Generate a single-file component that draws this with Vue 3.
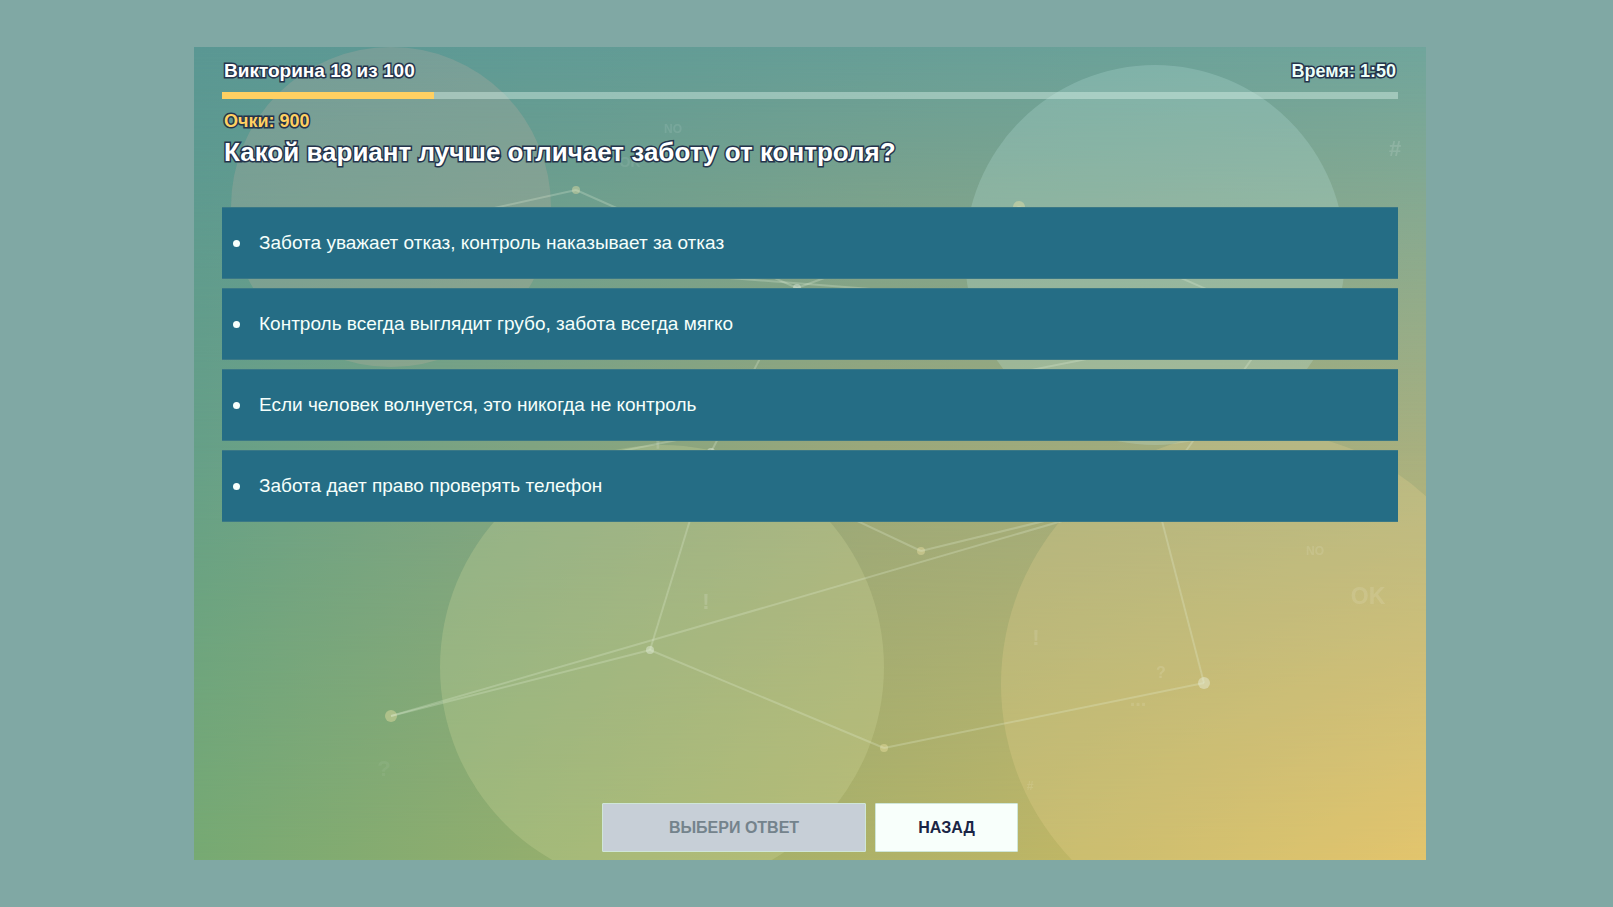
<script setup>
import { ref } from 'vue'

const quiz = { number: 18, total: 100, time: '1:50', score: 900 }
const question = 'Какой вариант лучше отличает заботу от контроля?'
const answers = [
  'Забота уважает отказ, контроль наказывает за отказ',
  'Контроль всегда выглядит грубо, забота всегда мягко',
  'Если человек волнуется, это никогда не контроль',
  'Забота дает право проверять телефон',
]
const selected = ref(null)

const circles = [
  { x: 197, y: 160, r: 160, fill: '#ffb8b0', opacity: 0.16 },
  { x: 961, y: 208, r: 190, fill: '#c6eee6', opacity: 0.22 },
  { x: 468, y: 620, r: 222, fill: '#d3dda0', opacity: 0.26 },
  { x: 1061, y: 637, r: 254, fill: '#f5dc96', opacity: 0.22 },
]
const points = {
  a: [382, 143, 4, 1], b: [825, 160, 6, 1], c: [603, 241, 4, 0], d: [517, 405, 4, 0],
  e: [456, 603, 4, 0], f: [197, 669, 6, 1], g: [727, 504, 4, 1], h: [690, 701, 4, 1],
  i: [1010, 636, 6, 0], j: [961, 447, 4, 0], k: [1085, 274, 4, 0], l: [296, 430, 4, 1],
  m: [128, 199, 4, 0],
}
const links = ['ma', 'ac', 'cb', 'bk', 'mk', 'kj', 'kl', 'cd', 'dg', 'gj', 'de', 'ef', 'fj', 'eh', 'hi', 'ij']
const marks = [
  { t: 'NO', x: 479, y: 86, s: 12, o: 0.09 },
  { t: 'OK', x: 436, y: 120, s: 14, o: 0.08 },
  { t: '#', x: 1201, y: 109, s: 22, o: 0.13 },
  { t: '!', x: 464, y: 406, s: 22, o: 0.14 },
  { t: '!', x: 512, y: 562, s: 22, o: 0.15 },
  { t: '?', x: 190, y: 729, s: 22, o: 0.05 },
  { t: '!', x: 842, y: 598, s: 22, o: 0.11 },
  { t: 'NO', x: 1121, y: 508, s: 12, o: 0.1 },
  { t: 'OK', x: 1174, y: 557, s: 23, o: 0.11 },
  { t: '?', x: 967, y: 631, s: 16, o: 0.12 },
  { t: '...', x: 944, y: 659, s: 20, o: 0.1 },
  { t: '#', x: 836, y: 743, s: 12, o: 0.1 },
]
</script>

<template>
  <div class="page">
    <main class="stage">
      <div class="tone tone-middle"></div>
      <div class="tone tone-top"></div>
      <svg class="backdrop" viewBox="0 0 1232 813" preserveAspectRatio="xMidYMid slice" aria-hidden="true">
        <circle v-for="(c, n) in circles" :key="'c' + n" :cx="c.x" :cy="c.y" :r="c.r" :fill="c.fill" :opacity="c.opacity" />
        <circle
          v-for="(p, name) in points" :key="name" :cx="p[0]" :cy="p[1]" :r="p[2]"
          :class="p[3] ? 'dot-warm' : 'dot-light'"
        />
        <line
          v-for="link in links" :key="link" class="link"
          :x1="points[link[0]][0]" :y1="points[link[0]][1]" :x2="points[link[1]][0]" :y2="points[link[1]][1]"
        />
        <text
          v-for="(m, n) in marks" :key="'m' + n" class="mark" :x="m.x" :y="m.y"
          :font-size="m.s" :opacity="m.o"
        >{{ m.t }}</text>
      </svg>

      <div class="content">
        <header class="head">
          <span class="outlined counter">Викторина {{ quiz.number }} из {{ quiz.total }}</span>
          <span class="outlined time">Время: {{ quiz.time }}</span>
        </header>
        <div class="progress" role="progressbar" aria-label="Викторина" :aria-valuenow="quiz.number" aria-valuemin="0" :aria-valuemax="quiz.total">
          <div class="progress-fill" :style="{ width: (quiz.number / quiz.total) * 100 + '%' }"></div>
        </div>
        <p class="outlined score">Очки: {{ quiz.score }}</p>
        <h1 class="outlined question">{{ question }}</h1>

        <div class="answers">
          <button
            v-for="(answer, n) in answers" :key="n" type="button" class="answer"
            :aria-pressed="selected === n" @click="selected = n"
          >
            <span class="bullet"></span>
            <span>{{ answer }}</span>
          </button>
        </div>

        <footer class="actions">
          <button type="button" class="action submit" :disabled="selected === null">ВЫБЕРИ ОТВЕТ</button>
          <button type="button" class="action back">НАЗАД</button>
        </footer>
      </div>
    </main>
  </div>
</template>

<style>
body {
  margin: 0;
  background: #80a8a4;
}
</style>

<style scoped>
.page {
  display: flex;
  box-sizing: border-box;
  min-height: 100vh;
  padding: 47px 187px 47px 194px;
  background: #80a8a4;
  font-family: "Liberation Sans", Arial, sans-serif;
}
.stage {
  position: relative;
  display: flex;
  flex: 1;
  overflow: hidden;
  background: linear-gradient(to right, #77aa73, #b2b368 58%, #debf62);
}
.tone,
.backdrop {
  position: absolute;
  inset: 0;
  width: 100%;
  height: 100%;
}
.tone-middle {
  background: linear-gradient(to right, #66a088, #9ca87a 55%, #a8b07f);
  mask-image: linear-gradient(to bottom, #000 50%, transparent);
}
.tone-top {
  background: linear-gradient(to right, #5a9793, #669e97 55%, #70a59c);
  mask-image: linear-gradient(to bottom, #000, transparent 50%);
}
.link {
  stroke: #e9f5dc;
  stroke-width: 2;
  stroke-opacity: 0.25;
}
.dot-warm {
  fill: #f3e7a8;
  fill-opacity: 0.4;
}
.dot-light {
  fill: #eef6ea;
  fill-opacity: 0.4;
}
.mark {
  fill: #ffffff;
  font-weight: 700;
  text-anchor: middle;
}
.content {
  position: relative;
  display: flex;
  flex: 1;
  flex-direction: column;
  padding: 12px 28px 8px;
}
.outlined {
  margin: 0;
  padding: 0 2px;
  font-weight: 700;
  -webkit-text-stroke: 3px #24344c;
  paint-order: stroke fill;
}
.head {
  display: flex;
  justify-content: space-between;
  align-items: center;
  height: 24px;
  margin-bottom: 9px;
}
.counter {
  color: #ffffff;
  font-size: 19px;
}
.time {
  color: #ecfff8;
  font-size: 18px;
}
.progress {
  height: 7px;
  background: rgba(222, 245, 235, 0.42);
}
.progress-fill {
  height: 100%;
  background: #ffd062;
}
.score {
  margin-top: 11px;
  color: #ffd062;
  font-size: 18px;
  line-height: 22px;
}
.question {
  margin-top: 4px;
  color: #ffffff;
  font-size: 26px;
  line-height: 32px;
}
.answers {
  display: flex;
  flex-direction: column;
  gap: 9px;
  margin-top: 39px;
}
.answer {
  display: flex;
  align-items: center;
  gap: 19px;
  height: 72px;
  padding: 0 11px;
  border: 1px solid #3a7886;
  border-width: 1px 0;
  background: #256d85;
  color: #f5fffb;
  font-family: inherit;
  font-size: 19px;
  text-align: left;
  cursor: pointer;
}
.bullet {
  width: 7px;
  height: 7px;
  border-radius: 50%;
  background: #f8fffc;
}
.actions {
  display: flex;
  justify-content: center;
  gap: 9px;
  margin-top: auto;
}
.action {
  height: 49px;
  border: 1px solid #cfe6d8;
  border-radius: 1px;
  font-family: inherit;
  font-size: 16px;
  font-weight: 700;
}
.submit {
  width: 264px;
  background: #c7cfd7;
  color: #74838c;
}
.back {
  width: 143px;
  background: #f8fffb;
  color: #1a2545;
  cursor: pointer;
}
</style>
